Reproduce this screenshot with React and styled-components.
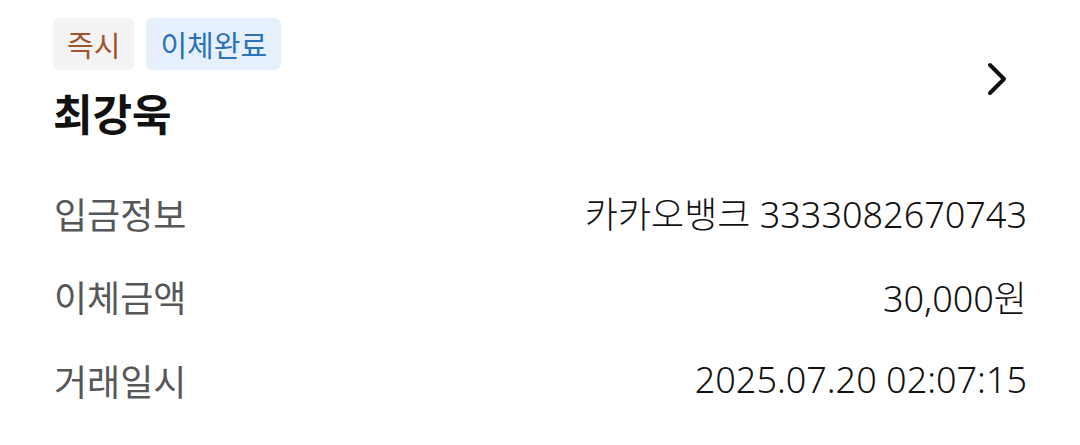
import React from 'react';
import styled, { createGlobalStyle } from 'styled-components';

const GlobalStyle = createGlobalStyle`
  html, body {
    margin: 0;
    padding: 0;
    background: #fff;
  }
  body {
    font-family: 'Noto Sans CJK KR', 'Noto Sans', sans-serif;
  }
`;

const Card = styled.div`
  width: 1080px;
  height: 445px;
  box-sizing: border-box;
  padding: 18px 53px 0 53px;
  background: #fff;
`;

const Header = styled.div`
  display: flex;
  align-items: center;
  justify-content: space-between;
`;

const HeaderInfo = styled.div`
  display: flex;
  flex-direction: column;
`;

const Badges = styled.div`
  display: flex;
  gap: 12px;
`;

const Badge = styled.span`
  display: inline-flex;
  align-items: center;
  height: 52px;
  padding: 0 14px;
  border-radius: 6px;
  font-size: 29px;
  line-height: 1;
  background: ${(p) => (p.$tone === 'blue' ? '#e5f0fc' : '#f3f3f3')};
  color: ${(p) => (p.$tone === 'blue' ? '#2c72b8' : '#a0542c')};
`;

const Name = styled.h1`
  margin: 14px 0 0 0;
  font-size: 43px;
  font-weight: 700;
  line-height: 56px;
  color: #111;
`;

const Chevron = styled.svg`
  width: 24px;
  height: 36px;
  margin-right: 17px;
`;

const Rows = styled.div`
  display: flex;
  flex-direction: column;
  margin-top: 31px;
`;

const Row = styled.div`
  display: flex;
  align-items: center;
  justify-content: space-between;
  height: 83.5px;
`;

const Label = styled.span`
  font-size: 36px;
  color: #555759;
  margin-left: 1px;
`;

const Value = styled.span`
  font-family: 'Noto Sans', 'Noto Sans CJK KR', sans-serif;
  font-size: 36px;
  font-weight: 300;
  color: #111;
`;

const rows = [
  ['입금정보', '카카오뱅크 3333082670743'],
  ['이체금액', '30,000원'],
  ['거래일시', '2025.07.20 02:07:15'],
];

export default function App() {
  return (
    <>
      <GlobalStyle />
      <Card>
        <Header>
          <HeaderInfo>
            <Badges>
              <Badge>즉시</Badge>
              <Badge $tone="blue">이체완료</Badge>
            </Badges>
            <Name>최강욱</Name>
          </HeaderInfo>
          <Chevron viewBox="0 0 24 36" fill="none" stroke="#111" strokeWidth="4" strokeLinecap="round" strokeLinejoin="round">
            <path d="M4 4l14 14L4 32" />
          </Chevron>
        </Header>
        <Rows>
          {rows.map(([k, v]) => (
            <Row key={k}>
              <Label>{k}</Label>
              <Value>{v}</Value>
            </Row>
          ))}
        </Rows>
      </Card>
    </>
  );
}
